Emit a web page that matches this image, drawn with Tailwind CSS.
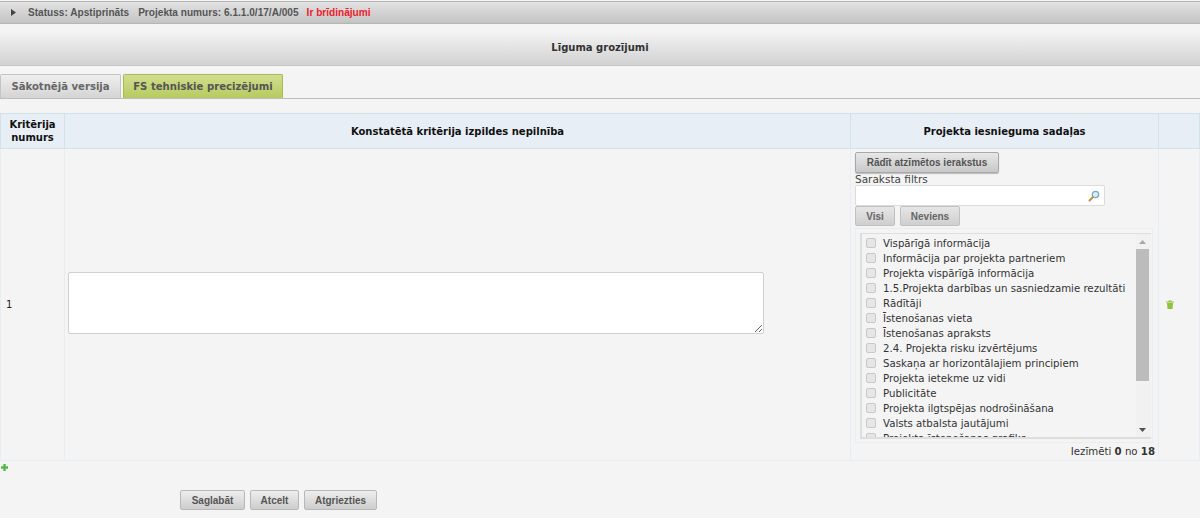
<!DOCTYPE html>
<html lang="lv">
<head>
    <meta charset="UTF-8">
    <title>Līguma grozījumi</title>
    <script src="https://cdn.jsdelivr.net/npm/@tailwindcss/browser@4"></script>
</head>
<body class="bg-[#f4f4f4] h-[518px] overflow-hidden font-['DejaVu_Sans',sans-serif] text-[10px] text-[#222]">
    <!-- status bar -->
    <div class="mt-px h-[23px] flex items-center bg-gradient-to-b from-[#e2e2e2] to-[#c4c4c4] border-t border-b border-[#b5b5b5] font-['Liberation_Sans',sans-serif] text-[10.1px] font-bold text-[#555]">
        <svg class="ml-[11px] mr-[12px]" width="5" height="7" viewBox="0 0 5 7"><path d="M0 0L5 3.5L0 7Z" fill="#444"/></svg>
        <span>Statuss: Apstiprināts</span>
        <span class="ml-[9px]">Projekta numurs: 6.1.1.0/17/A/005</span>
        <span class="ml-2 text-[#f0202a]">Ir brīdinājumi</span>
    </div>

    <!-- title -->
    <div class="mt-[6px] h-[36px] flex items-center justify-center bg-gradient-to-b from-[#f5f5f5] to-[#d2d2d2] border-b border-[#c8c8c8] text-[10px] font-bold text-[#333]">Līguma grozījumi</div>

    <!-- tabs -->
    <div class="mt-[8px] h-[25px] flex items-end gap-[2px] border-b border-[#bdbdbd] font-bold text-[10.1px]">
        <div class="w-[121px] h-[24px] flex items-center justify-center rounded-t-[2px] border border-b-0 border-[#c4c4c4] bg-gradient-to-b from-[#efefef] to-[#d4d4d4] text-[#666]">Sākotnējā versija</div>
        <div class="w-[160px] h-[24px] flex items-center justify-center rounded-t-[2px] border border-b-0 border-[#a6bc52] bg-gradient-to-b from-[#d3dd8e] to-[#b5cb5e] text-[#555]">FS tehniskie precizējumi</div>
    </div>

    <!-- table -->
    <table class="mt-[14px] w-full table-fixed border-collapse">
        <colgroup>
            <col class="w-[64px]">
            <col class="w-[786px]">
            <col class="w-[308px]">
            <col>
        </colgroup>
        <thead>
            <tr class="h-[35px] bg-[#e8eef5] text-[10px] font-bold text-[#111]">
                <th class="border border-[#cfe3e8] leading-[13px] font-bold">Kritērija numurs</th>
                <th class="border border-[#cfe3e8] font-bold">Konstatētā kritērija izpildes nepilnība</th>
                <th class="border border-[#cfe3e8] font-bold">Projekta iesnieguma sadaļas</th>
                <th class="border border-[#cfe3e8]"></th>
            </tr>
        </thead>
        <tbody>
            <tr class="h-[312px]">
                <td class="border border-[#e6edf5] pl-[5px] text-[10px] align-middle">1</td>
                <td class="border border-[#e6edf5] pl-[3px] align-middle">
                    <textarea class="block mb-[4px] w-[696px] h-[62px] bg-white border border-[#cfcfcf] rounded-[2px]"></textarea>
                </td>
                <td class="border border-[#e6edf5] pl-[4px] align-top">
                    <button class="mt-[3px] block w-[144px] h-[21px] whitespace-nowrap rounded-[2px] border border-[#a8a8a8] bg-gradient-to-b from-[#e8e8e8] to-[#c8c8c8] font-['Liberation_Sans',sans-serif] font-bold text-[#555] shadow-[0_1px_1px_#bbb]">Rādīt atzīmētos ierakstus</button>
                    <div class="h-[12px] leading-[13px] text-[10.5px] text-[#444]">Saraksta filtrs</div>
                    <div class="relative w-[250px] h-[21px] bg-white border border-[#dcdcdc] rounded-[2px]">
                        <svg class="absolute right-[4px] top-[4px]" width="12" height="12" viewBox="0 0 12 12"><circle cx="7.5" cy="4.5" r="3.2" fill="#d5ecf7" stroke="#7aa7c4" stroke-width="1.2"/><path d="M5 7L1.5 10.5" stroke="#c98a3c" stroke-width="2" stroke-linecap="round"/></svg>
                    </div>
                    <div class="flex gap-[5px] font-['Liberation_Sans',sans-serif] font-bold text-[#666]">
                        <button class="w-[40px] h-[20px] rounded-[2px] border border-[#c0c0c0] bg-gradient-to-b from-[#e6e6e6] to-[#cfcfcf]">Visi</button>
                        <button class="w-[60px] h-[20px] rounded-[2px] border border-[#c0c0c0] bg-gradient-to-b from-[#e6e6e6] to-[#cfcfcf]">Neviens</button>
                    </div>
                    <div class="mt-[2px] w-[298px] h-[215px] border border-[#e8eef2] pt-[4px] pl-[4px] pr-[1px]">
                        <div class="flex h-[206px] border-l-2 border-t border-b-2 border-[#dedede] overflow-hidden">
                            <ul class="flex-1 pt-[2px] pl-[4px] overflow-hidden text-[#333] text-[10.2px]">
                                <li class="h-[15px] flex items-center gap-[7px]"><span class="shrink-0 w-[10px] h-[10px] -mt-[2px] rounded-[2px] border border-[#c8c8c8] bg-[#e6e6e6]"></span>Vispārīgā informācija</li>
                                <li class="h-[15px] flex items-center gap-[7px]"><span class="shrink-0 w-[10px] h-[10px] -mt-[2px] rounded-[2px] border border-[#c8c8c8] bg-[#e6e6e6]"></span>Informācija par projekta partneriem</li>
                                <li class="h-[15px] flex items-center gap-[7px]"><span class="shrink-0 w-[10px] h-[10px] -mt-[2px] rounded-[2px] border border-[#c8c8c8] bg-[#e6e6e6]"></span>Projekta vispārīgā informācija</li>
                                <li class="h-[15px] flex items-center gap-[7px]"><span class="shrink-0 w-[10px] h-[10px] -mt-[2px] rounded-[2px] border border-[#c8c8c8] bg-[#e6e6e6]"></span>1.5.Projekta darbības un sasniedzamie rezultāti</li>
                                <li class="h-[15px] flex items-center gap-[7px]"><span class="shrink-0 w-[10px] h-[10px] -mt-[2px] rounded-[2px] border border-[#c8c8c8] bg-[#e6e6e6]"></span>Rādītāji</li>
                                <li class="h-[15px] flex items-center gap-[7px]"><span class="shrink-0 w-[10px] h-[10px] -mt-[2px] rounded-[2px] border border-[#c8c8c8] bg-[#e6e6e6]"></span>Īstenošanas vieta</li>
                                <li class="h-[15px] flex items-center gap-[7px]"><span class="shrink-0 w-[10px] h-[10px] -mt-[2px] rounded-[2px] border border-[#c8c8c8] bg-[#e6e6e6]"></span>Īstenošanas apraksts</li>
                                <li class="h-[15px] flex items-center gap-[7px]"><span class="shrink-0 w-[10px] h-[10px] -mt-[2px] rounded-[2px] border border-[#c8c8c8] bg-[#e6e6e6]"></span>2.4. Projekta risku izvērtējums</li>
                                <li class="h-[15px] flex items-center gap-[7px]"><span class="shrink-0 w-[10px] h-[10px] -mt-[2px] rounded-[2px] border border-[#c8c8c8] bg-[#e6e6e6]"></span>Saskaņa ar horizontālajiem principiem</li>
                                <li class="h-[15px] flex items-center gap-[7px]"><span class="shrink-0 w-[10px] h-[10px] -mt-[2px] rounded-[2px] border border-[#c8c8c8] bg-[#e6e6e6]"></span>Projekta ietekme uz vidi</li>
                                <li class="h-[15px] flex items-center gap-[7px]"><span class="shrink-0 w-[10px] h-[10px] -mt-[2px] rounded-[2px] border border-[#c8c8c8] bg-[#e6e6e6]"></span>Publicitāte</li>
                                <li class="h-[15px] flex items-center gap-[7px]"><span class="shrink-0 w-[10px] h-[10px] -mt-[2px] rounded-[2px] border border-[#c8c8c8] bg-[#e6e6e6]"></span>Projekta ilgtspējas nodrošināšana</li>
                                <li class="h-[15px] flex items-center gap-[7px]"><span class="shrink-0 w-[10px] h-[10px] -mt-[2px] rounded-[2px] border border-[#c8c8c8] bg-[#e6e6e6]"></span>Valsts atbalsta jautājumi</li>
                                <li class="h-[15px] flex items-center gap-[7px]"><span class="shrink-0 w-[10px] h-[10px] -mt-[2px] rounded-[2px] border border-[#c8c8c8] bg-[#e6e6e6]"></span>Projekta īstenošanas grafiks</li>
                            </ul>
                            <div class="w-[15px] flex flex-col items-start bg-[#f1f1f1]">
                                <svg class="mt-[6px] ml-[3px]" width="7" height="4" viewBox="0 0 7 4"><path d="M3.5 0L7 4H0Z" fill="#a8a8a8"/></svg>
                                <div class="mt-[5px] w-[13px] h-[132px] bg-[#bcbcbc]"></div>
                                <svg class="mt-auto mb-[5px] ml-[3px]" width="7" height="4" viewBox="0 0 7 4"><path d="M0 0H7L3.5 4Z" fill="#505050"/></svg>
                            </div>
                        </div>
                    </div>
                    <div class="mt-[1px] w-[300px] h-[14px] text-right text-[10.2px] text-[#333]">Iezīmēti <b>0</b> no <b>18</b></div>
                </td>
                <td class="border border-[#e6edf5] pl-[7px] align-middle">
                    <svg width="8" height="9" viewBox="0 0 8 9"><path d="M0 1.5H8V2.5H0ZM2.5 1.5V0.5H5.5V1.5ZM1 3H7L6.5 9H1.5Z" fill="#8fc33a"/></svg>
                </td>
            </tr>
        </tbody>
    </table>

    <svg class="ml-px mt-[3px] block" width="7" height="7" viewBox="0 0 7 7"><path d="M2.3 0H4.7V2.3H7V4.7H4.7V7H2.3V4.7H0V2.3H2.3Z" fill="#53b84a"/></svg>

    <!-- actions -->
    <div class="mt-[19px] ml-[180px] flex gap-[5px] font-['Liberation_Sans',sans-serif] text-[10px] font-bold text-[#555]">
        <button class="w-[65px] h-[20px] rounded-[2px] border border-[#b8b8b8] bg-gradient-to-b from-[#eeeeee] to-[#cdcdcd]">Saglabāt</button>
        <button class="w-[49px] h-[20px] rounded-[2px] border border-[#b8b8b8] bg-gradient-to-b from-[#eeeeee] to-[#cdcdcd]">Atcelt</button>
        <button class="w-[73px] h-[20px] rounded-[2px] border border-[#b8b8b8] bg-gradient-to-b from-[#eeeeee] to-[#cdcdcd]">Atgriezties</button>
    </div>
</body>
</html>
